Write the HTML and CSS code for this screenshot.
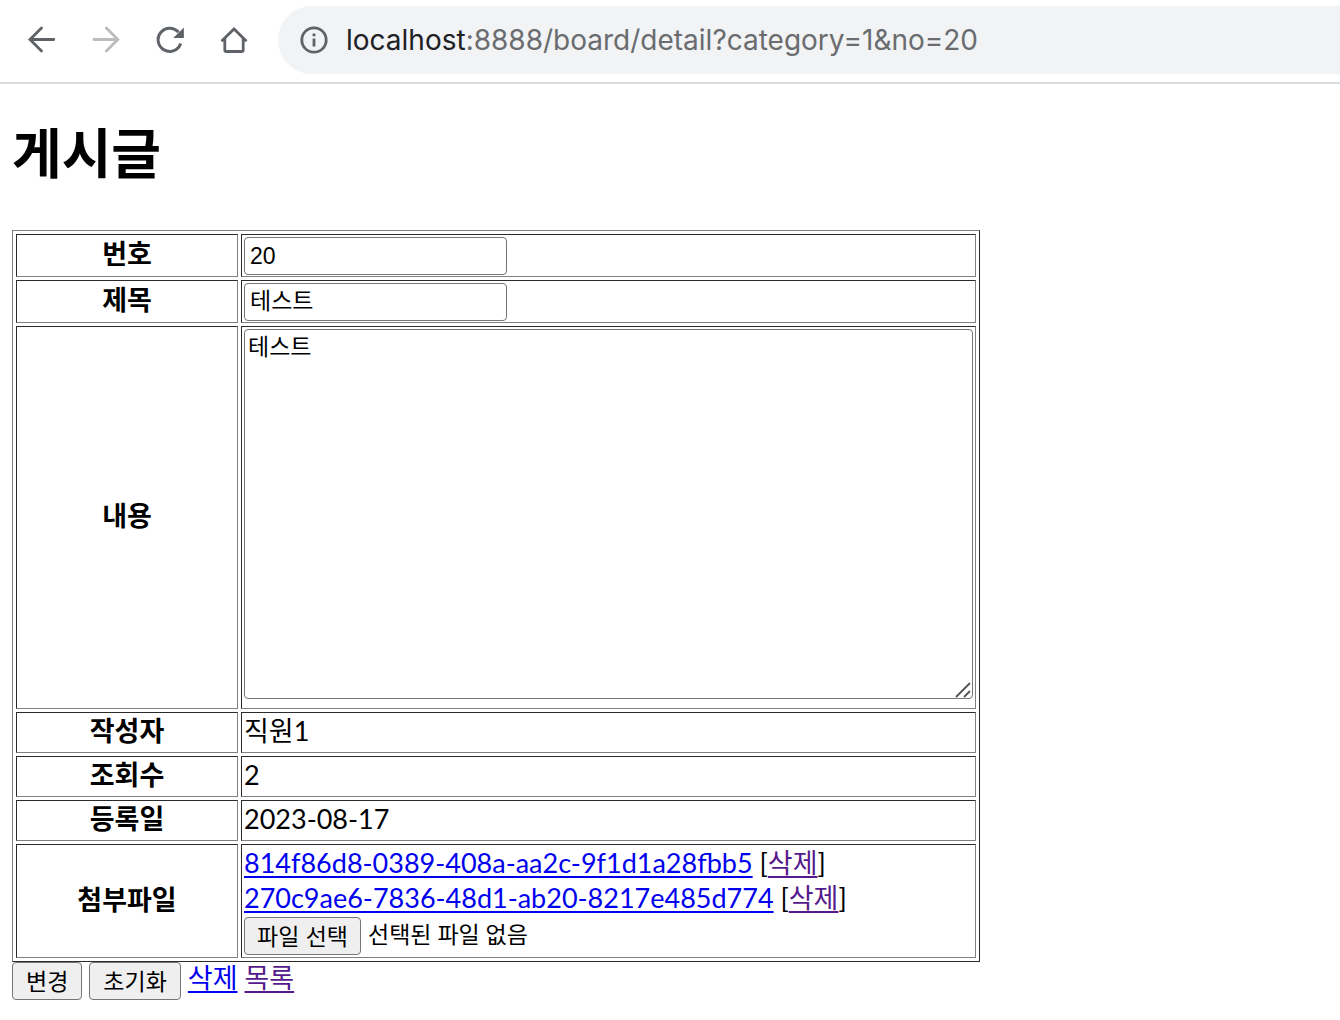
FILE: index.html
```html
<!DOCTYPE html>
<html lang="ko">
<head>
  <meta charset="UTF-8">
  <meta name="viewport" content="width=device-width, initial-scale=1.0">
  <title>게시글</title>
  <link rel="stylesheet" href="styles.css">
</head>
<body>

  <header class="toolbar">
    <button class="nav-btn" type="button" aria-label="뒤로">
      <svg width="32" height="32" viewBox="0 0 32 32" fill="none" stroke="#5f6368" stroke-width="2.8" stroke-linecap="round"><path d="M27.8 15.5H4.5M15.5 4L4 15.5L15.5 27"/></svg>
    </button>
    <button class="nav-btn" type="button" aria-label="앞으로" disabled>
      <svg width="32" height="32" viewBox="0 0 32 32" fill="none" stroke="#babcbe" stroke-width="2.8" stroke-linecap="round"><path d="M4 15.5H27.5M16.3 4L27.8 15.5L16.3 27"/></svg>
    </button>
    <button class="nav-btn" type="button" aria-label="새로고침">
      <svg width="32" height="32" viewBox="0 0 32 32" fill="none"><path d="M26.7 19.5A11.6 11.6 0 1 1 24.5 8.2" stroke="#5f6368" stroke-width="3"/><path d="M29.9 3.5V14H19.2Z" fill="#5f6368"/></svg>
    </button>
    <button class="nav-btn" type="button" aria-label="홈">
      <svg width="32" height="32" viewBox="0 0 32 32" fill="none" stroke="#5f6368" stroke-width="2.8"><path d="M3.5 17.2L16 4.9L28.5 17.2"/><path d="M6.8 14V26.5Q6.8 27.5 7.8 27.5H24.2Q25.2 27.5 25.2 26.5V14"/></svg>
    </button>
    <div class="address">
      <svg width="28" height="28" viewBox="0 0 28 28" fill="none"><circle cx="14" cy="14" r="12.2" stroke="#5f6368" stroke-width="2.8"/><path d="M12.6 7.5H15.4V10.2H12.6ZM12.6 12.6H15.4V20.6H12.6Z" fill="#5f6368"/></svg>
      <span class="url"><span class="host">localhost</span>:8888/board/detail?category=1&amp;no=20</span>
    </div>
  </header>

  <main class="page">
    <h1>게시글</h1>

    <form>
      <table class="detail">
        <tr>
          <th><label for="no">번호</label></th>
          <td><input class="text-input" type="text" id="no" name="no" value="20" readonly></td>
        </tr>
        <tr>
          <th><label for="title">제목</label></th>
          <td><input class="text-input korean" type="text" id="title" name="title" value="테스트"></td>
        </tr>
        <tr>
          <th><label for="content">내용</label></th>
          <td>
            <div class="content-box">
              <textarea id="content" name="content">테스트</textarea>
              <svg class="grip" width="16" height="16" viewBox="0 0 16 16" stroke="#555" stroke-width="1.8"><path d="M1 15L15 1M9 15L15 9"/></svg>
            </div>
          </td>
        </tr>
        <tr><th>작성자</th><td class="value">직원1</td></tr>
        <tr><th>조회수</th><td class="value">2</td></tr>
        <tr><th>등록일</th><td class="value">2023-08-17</td></tr>
        <tr>
          <th><label for="files">첨부파일</label></th>
          <td class="files">
            <div><a href="#file1">814f86d8-0389-408a-aa2c-9f1d1a28fbb5</a> [<a class="visited" href="#delete1">삭제</a>]</div>
            <div><a href="#file2">270c9ae6-7836-48d1-ab20-8217e485d774</a> [<a class="visited" href="#delete2">삭제</a>]</div>
            <div class="upload">
              <input type="file" id="files" name="files" multiple hidden>
              <button class="btn" type="button" onclick="document.getElementById('files').click()">파일 선택</button>
              <span>선택된 파일 없음</span>
            </div>
          </td>
        </tr>
      </table>

      <div class="actions">
        <button class="btn" type="submit">변경</button>
        <button class="btn" type="reset">초기화</button>
        <a href="#delete">삭제</a>
        <a class="visited" href="#list">목록</a>
      </div>
    </form>
  </main>

</body>
</html>
```
FILE: styles.css
```css
* {
  box-sizing: border-box;
}

body {
  margin: 0;
  background: #fff;
  color: #000;
  font-family: Lato, "Noto Sans CJK KR", sans-serif;
  font-size: 27px;
  line-height: 35px;
}

/* browser bar */
.toolbar {
  display: flex;
  align-items: center;
  gap: 32px;
  height: 84px;
  padding: 0 0 2px 26px;
  border-bottom: 2px solid #dadce0;
}

.nav-btn {
  display: flex;
  flex: none;
  padding: 0;
  border: none;
  background: none;
}

.address {
  display: flex;
  flex: 1;
  align-items: center;
  gap: 18px;
  height: 68px;
  margin-left: -4px;
  padding-left: 22px;
  border-radius: 34px 0 0 34px;
  background: #f1f3f4;
}

.url {
  color: #6a6c6f;
  font-family: Inter, sans-serif;
  font-size: 28px;
  white-space: nowrap;
}

.host {
  color: #202124;
}

/* board */
.page {
  padding: 32px 12px;
}

h1 {
  margin: 0 0 38px;
  font-size: 54px;
  line-height: 76px;
}

.detail {
  width: 968px;
  border: 1px solid;
  border-color: #808080 #2b2b2b #2b2b2b #808080;
  border-spacing: 3px;
}

.detail th,
.detail td {
  padding: 2px;
  border: 1px solid;
  border-color: #2b2b2b #808080 #808080 #2b2b2b;
}

.detail th {
  width: 222px;
}

.detail th,
.detail .value {
  padding: 0 2px 4px;
}

.detail .files {
  padding-top: 0;
}

.text-input {
  display: block;
  width: 263px;
  height: 38px;
  margin-bottom: -1px;
  padding: 0 5px;
  border: 1px solid #767676;
  border-radius: 4px;
  font-family: "Liberation Sans", "Noto Sans CJK KR", sans-serif;
  font-size: 23px;
}

.korean {
  padding-bottom: 6px;
}

.content-box {
  position: relative;
  padding-bottom: 7px;
}

textarea {
  display: block;
  width: 100%;
  height: 370px;
  padding: 0 3px;
  border: 1px solid #767676;
  border-radius: 4px;
  resize: none;
  font-family: "Liberation Sans", "Noto Sans CJK KR", sans-serif;
  font-size: 23px;
  line-height: 35px;
}

.grip {
  position: absolute;
  right: 2px;
  bottom: 8px;
}

a {
  color: #0000ee;
  text-decoration-thickness: 2px;
  text-underline-offset: 3px;
}

a.visited {
  color: #551a8b;
}

.upload,
.actions {
  display: flex;
  gap: 7px;
}

.upload {
  margin-top: 2px;
  font-size: 23px;
}

.actions {
  line-height: 32px;
}

.btn {
  height: 38px;
  padding: 0 12px 4px;
  border: 1px solid #767676;
  border-radius: 4px;
  background: #efefef;
  color: #000;
  font-family: "Liberation Sans", "Noto Sans CJK KR", sans-serif;
  font-size: 23px;
}

.actions .btn {
  padding: 0 13px 4px;
}
```
